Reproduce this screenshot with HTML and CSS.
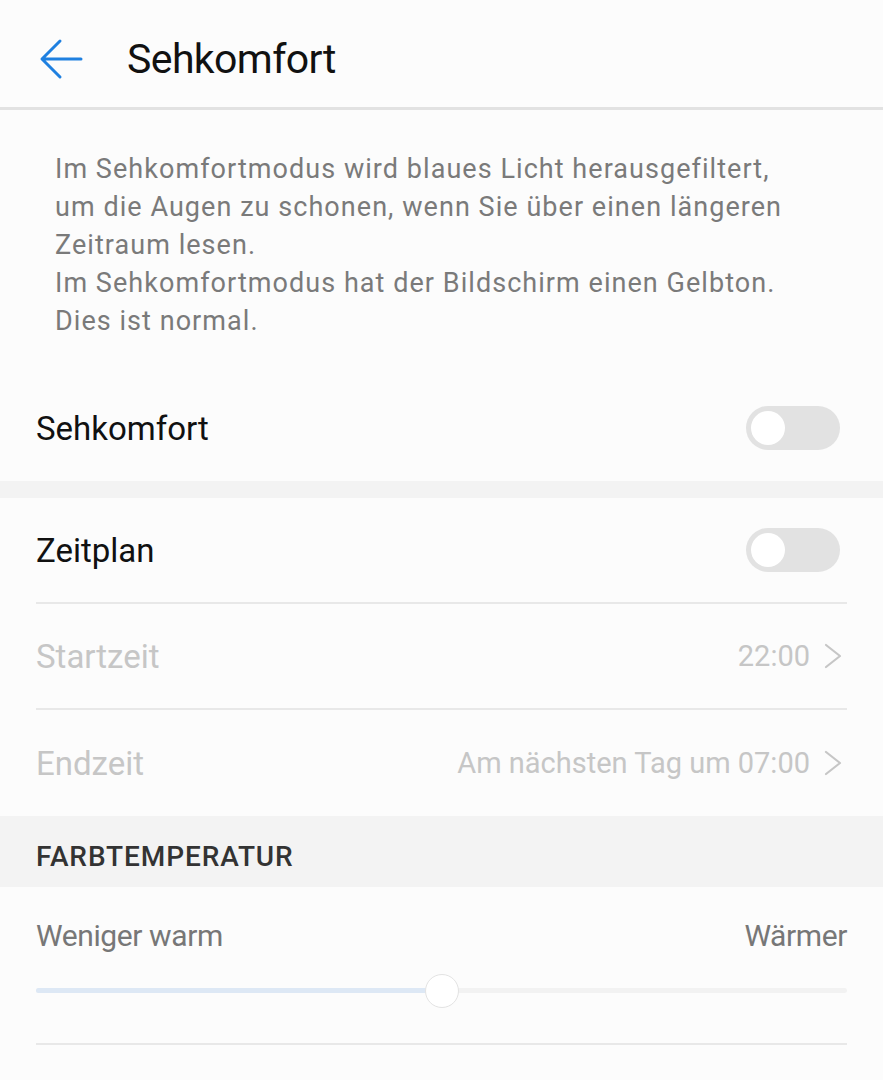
FILE: index.html
```html
<!DOCTYPE html>
<html lang="de">

<head>
  <meta charset="UTF-8">
  <meta name="viewport" content="width=device-width, initial-scale=1.0">
  <title>Sehkomfort</title>
  <link rel="stylesheet" href="styles.css">
</head>

<body>

  <header class="topbar">
    <svg class="back" width="44" height="44" viewBox="0 0 44 44">
      <path d="M42 22H4M21 4L3 22l18 18" fill="none" stroke="#1f80e0" stroke-width="3" stroke-linecap="round" stroke-linejoin="round" />
    </svg>
    <h1>Sehkomfort</h1>
  </header>

  <p class="intro">
    Im Sehkomfortmodus wird blaues Licht herausgefiltert,<br>
    um die Augen zu schonen, wenn Sie über einen längeren<br>
    Zeitraum lesen.<br>
    Im Sehkomfortmodus hat der Bildschirm einen Gelbton.<br>
    Dies ist normal.
  </p>

  <div class="group">
    <div class="row">
      <span class="label">Sehkomfort</span>
      <span class="switch"></span>
    </div>
  </div>

  <div class="spacer"></div>

  <div class="group">
    <div class="row">
      <span class="label">Zeitplan</span>
      <span class="switch"></span>
    </div>
    <div class="row disabled">
      <span class="label">Startzeit</span>
      <span class="value">22:00
        <svg class="chevron" width="18" height="26" viewBox="0 0 18 26">
          <path d="M2 2l14 11L2 24" fill="none" stroke="#c6c6c6" stroke-width="2.2" stroke-linecap="round" stroke-linejoin="round" />
        </svg>
      </span>
    </div>
    <div class="row disabled">
      <span class="label">Endzeit</span>
      <span class="value">Am nächsten Tag um 07:00
        <svg class="chevron" width="18" height="26" viewBox="0 0 18 26">
          <path d="M2 2l14 11L2 24" fill="none" stroke="#c6c6c6" stroke-width="2.2" stroke-linecap="round" stroke-linejoin="round" />
        </svg>
      </span>
    </div>
  </div>

  <div class="section-title">FARBTEMPERATUR</div>

  <div class="group">
    <div class="temp">
      <div class="temp-labels">
        <span>Weniger warm</span>
        <span>Wärmer</span>
      </div>
      <div class="slider">
        <div class="slider-fill" style="width: 50%"></div>
        <div class="slider-thumb"></div>
      </div>
    </div>
  </div>

</body>

</html>
```

FILE: styles.css
```css
body {
  margin: 0;
  font-family: Roboto, "Noto Sans", sans-serif;
  background-color: #fcfcfc;
  color: #111;
}

.topbar {
  height: 97px;
  padding-top: 10px;
  display: flex;
  align-items: center;
  padding-left: 39px;
  border-bottom: 3px solid #e2e2e2;
}

.back {
  flex: none;
}

.topbar h1 {
  margin: 0 0 0 44px;
  font-size: 41px;
  font-weight: 400;
  letter-spacing: -0.6px;
  color: #111;
}

.intro {
  margin: 0;
  padding: 40px 0 35px 55px;
  font-size: 27px;
  line-height: 38px;
  letter-spacing: 1.05px;
  color: #7a7a7a;
}

.group {
  padding: 0 36px;
}

.row {
  height: 106px;
  display: flex;
  align-items: center;
  justify-content: space-between;
  border-bottom: 2px solid #e8e8e8;
  box-sizing: border-box;
}

.group .row:last-child {
  border-bottom: none;
}

.label {
  font-size: 33px;
  color: #111;
}

.disabled .label,
.disabled .value {
  color: #c6c6c6;
}

.value {
  display: flex;
  align-items: center;
  font-size: 29px;
  margin-right: 5px;
}

.chevron {
  margin-left: 14px;
}

.switch {
  width: 94px;
  height: 44px;
  border-radius: 22px;
  background-color: #e2e2e2;
  margin-right: 7px;
  position: relative;
}

.switch::after {
  content: "";
  position: absolute;
  left: 5px;
  top: 5px;
  width: 34px;
  height: 34px;
  border-radius: 50%;
  background-color: #fff;
}

.spacer {
  height: 17px;
  background-color: #f3f3f3;
}

.section-title {
  height: 71px;
  display: flex;
  align-items: center;
  padding: 10px 36px 0;
  box-sizing: border-box;
  background-color: #f3f3f3;
  font-size: 28px;
  font-weight: 500;
  letter-spacing: 0.9px;
  color: #333;
}

.temp {
  height: 158px;
  border-bottom: 2px solid #e8e8e8;
  box-sizing: border-box;
  padding-top: 31px;
}

.temp-labels {
  display: flex;
  justify-content: space-between;
  font-size: 30px;
  letter-spacing: -0.4px;
  color: #777;
}

.slider {
  position: relative;
  height: 5px;
  margin-top: 35px;
  border-radius: 3px;
  background-color: #f2f2f2;
}

.slider-fill {
  height: 100%;
  border-radius: 3px;
  background-color: #dde8f5;
}

.slider-thumb {
  position: absolute;
  left: 50%;
  top: 50%;
  width: 32px;
  height: 32px;
  margin: -17px 0 0 -17px;
  border-radius: 50%;
  border: 1px solid #e3e3e3;
  background-color: #fff;
}
```
